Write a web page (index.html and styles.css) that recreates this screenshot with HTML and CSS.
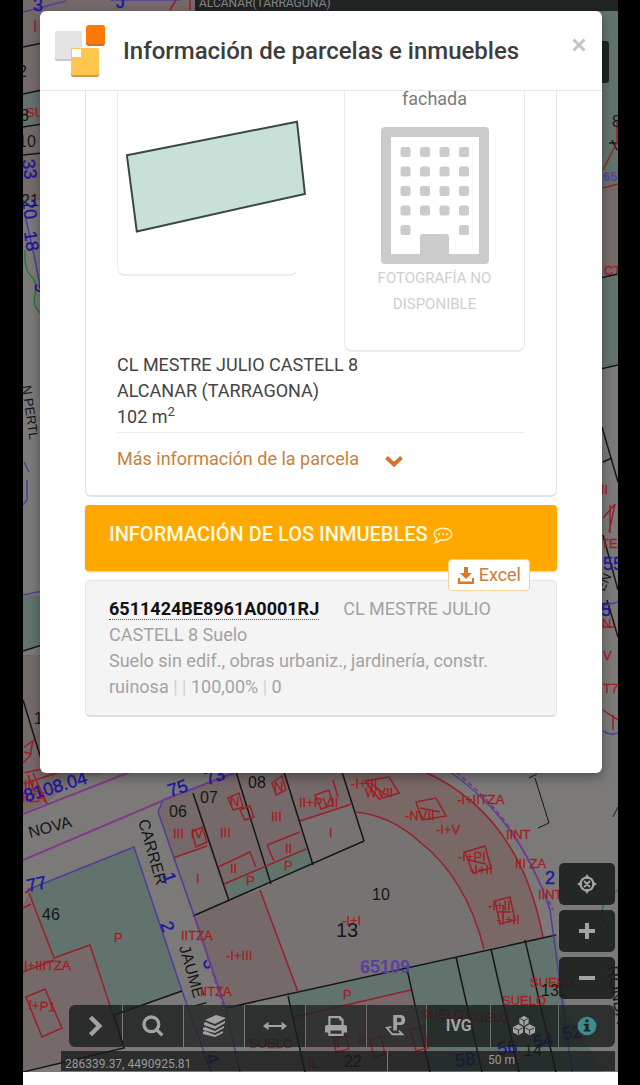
FILE: index.html
```html
<!DOCTYPE html>
<html lang="es">
<head>
<meta charset="utf-8">
<meta name="viewport" content="width=device-width, initial-scale=1">
<title>Información de parcelas e inmuebles</title>
<link rel="stylesheet" href="styles.css">
</head>
<body>
<div class="screen">
<main class="viewer">
<svg class="map" viewBox="23 0 595 1072" preserveAspectRatio="xMinYMin slice" aria-hidden="true">
  <rect class="street" x="23" y="0" width="595" height="1072"/>
  <!-- parcels along the left edge -->
  <path class="built" d="M23 0H200V200H23Z"/>
  <path class="green" d="M23 94L42 90V124L23 127Z"/>
  <path class="k" d="M23 47L42 43M23 94L42 90M23 127L42 124M23 155L42 153"/>
  <path class="v" d="M23 12L66 1M110 0L180 0M25 215L34 255L41 290"/>
  <path class="g" d="M25 250q-1 20 6 26t4 18t6 20l3 20"/>
  <path class="r" d="M170 10l6-10M190 10V0M35 20V32"/>
  <text class="b num" x="33" y="11">3</text><text class="b num" x="116" y="8">J</text>
  <text class="r lab" x="26" y="117">SUELO</text>
  <text class="kt num" x="20" y="121">8</text><text class="kt num" x="18" y="147">10</text>
  <text class="kt num" x="18" y="77">2</text><text class="kt num" x="21" y="206">21</text>
  <text class="b num" transform="translate(22 160) rotate(82)">33</text>
  <text class="b num" transform="translate(22 200) rotate(82)">20</text>
  <text class="b num" transform="translate(24 232) rotate(82)">18</text>
  <text class="b num" transform="translate(34 284) rotate(76)">9</text>
  <text class="kt lab" transform="translate(22 386) rotate(82)">N PERTL</text>
  <path class="v" d="M24 462l5 10M27 480v20l-4 5M23 595L42 591"/>
  <path class="built" d="M23 655H100V775H23Z"/>
  <path class="green" d="M23 595H42V645L23 651Z"/>
  <path class="k" d="M23 651L42 645M23 700L46 775"/>
  <text class="kt num" x="34" y="724">1</text>
  <path class="r" d="M24 747l9-6l-3 15l-7 7M23 773L42 769M24 752l8 2"/>
  <!-- parcels along the right edge -->
  <rect class="green" x="600" y="11" width="18" height="355"/>
  <path class="built" d="M600 189L618 184V275L600 278Z"/>
  <path class="k" d="M600 278L618 274M600 369L618 365M602 427L618 482M603 462L612 458M603 535L618 590M607 600L618 637M609 143h9M612 140l5 10"/>
  <path class="r" d="M603 170l14-28v-20M603 188l15-4M603 518l12-14l-6 28M610 505v28M603 627h12M603 710l15 10M613 715v15"/>
  <text class="vt lab" x="603" y="181">65</text><text class="kt num" x="612" y="127">8</text>
  <text class="r lab" x="604" y="275">CT</text><text class="r lab" x="601" y="494">II</text>
  <text class="r lab" x="601" y="548">TE</text><text class="r lab" x="602" y="628">N</text>
  <text class="r lab" x="603" y="660">V</text><text class="r lab" x="603" y="693">T7</text>
  <text class="b num" x="603" y="570">55</text><text class="kt lab" transform="translate(604 592) rotate(-65)">EN</text>
  <text class="b num" x="601" y="616">5</text>
  <path class="v" d="M603 606l15-4M603 731q8 5 15 2"/>
  <!-- block at the north west -->
  <path class="built" d="M23 773H80L47 803L23 812Z"/>
  <path class="p" d="M23 814L130 772"/>
  <path class="r" d="M28 775l6 16l10 2M33 773l14 31M60 772L23 784"/>
  <text class="r lab" x="24" y="789">III</text><text class="r lab" x="22" y="802">IIZA</text>
  <text class="b num" transform="translate(26 802) rotate(-17)">8108.04</text>
  <text class="kt lab street-name" transform="translate(30 838) rotate(-15)">NOVA</text>
  <!-- block 46 -->
  <path class="built" d="M23 905L29 893L53 958L90 945L123 1048L23 1072Z"/>
  <path class="green" d="M27 890L134 847L182 991L114 1015L90 945L54 958Z"/>
  <path class="p" d="M23 860L162 801L240 772"/>
  <path class="v" d="M27 890L134 847L182 991L211 1072"/>
  <path class="r" d="M29 893L54 958L90 945L124 1048M23 972L54 960M23 908l8-4M26 997l19-8l17 39l-20 9zM25 893l8-5"/>
  <path class="k" d="M114 1015L182 991M114 1015L124 1048L23 1072"/>
  <text class="b num" transform="translate(28 892) rotate(-12)">77</text>
  <text class="kt num" x="42" y="920">46</text>
  <text class="r lab" x="114" y="942">P</text><text class="r lab" x="24" y="970">I+IIITZA</text>
  <text class="r lab" transform="translate(28 1009) rotate(6)">I+P1</text>
  <text class="kt lab street-name" transform="translate(138 821) rotate(74)">CARRER</text>
  <text class="kt lab street-name" transform="translate(179 947) rotate(74)">JAUME I</text>
  <text class="b num" transform="translate(160 924) rotate(70)">2</text>
  <text class="b num" transform="translate(203 960) rotate(80)">3</text>
  <text class="b num" transform="translate(162 875) rotate(70)">1</text>
  <text class="b num" transform="translate(205 1056) rotate(70)">4</text>
  <!-- central blocks -->
  <path class="built" d="M158 812L163 800L236 772H350L364 841L229 901L260 890L298 992L226 1008L193 916L173 858Z"/>
  <path class="open" d="M300 821L351 804L364 841L313 865ZM173 858L207 845L229 901L195 916Z"/>
  <path class="open" d="M260 889L364 841L355 812Q390 816 420 842Q466 878 484 950L298 992Z"/>
  <path class="green" d="M224 884L306 849L313 865L229 901Z"/>
  <path class="band" d="M340 772H425Q520 815 543 937L484 949Q466 878 420 842Q390 815 355 812Z"/>
  <path class="green" d="M288 995L556 935L566 1010L605 1072H305Z"/>
  <path class="built" d="M293 1017L411 990L430 1072H305Z"/>
  <path class="k" d="M193 793L229 901M236 772L271 884M284 772L313 865M342 772L364 841M193 916L364 841M226 1008L556 935M288 996L305 1072M407 969L430 1072M456 957L482 1072M491 949L519 1072M525 940L556 1072"/>
  <path class="r" d="M173 858L207 846M218 867l32-15l6 15M224 884L306 849M267 845l33-13M267 845l7 16M300 821L352 804M260 890L298 992M294 1017L411 990M425 772Q520 815 543 937M355 812Q390 815 420 842Q466 878 484 949M228 798l11-5l4 14l-10 3zM240 810l10-4l4 11l-9 3zM272 783l10-7l4 14l-10 5zM192 832l10-5l5 15l-11 5zM315 795l14-5l4 15l-12 4zM333 780l5 17"/>
  <path class="v" d="M158 812L163 800L236 772M158 812L195 918L226 1010L240 1072M450 772Q520 820 550 910L572 1072"/>
  <path class="p dashed" d="M195 918L224 1008M163 800L240 772M456 772Q500 808 520 845T553 910"/>
  <text class="b num" transform="translate(170 797) rotate(-18)">75</text>
  <text class="b num" transform="translate(207 785) rotate(-18)">73</text>
  <text class="kt num" x="169" y="817">06</text><text class="kt num" x="200" y="803">07</text>
  <text class="kt num" x="248" y="788">08</text><text class="kt num" x="372" y="900">10</text>
  <text class="kt big" x="336" y="937">13</text>
  <g class="r lab">
    <text x="173" y="838">III</text><text x="196" y="883">I</text><text x="220" y="837">III</text>
    <text x="271" y="821">III</text><text x="329" y="837">I</text><text x="299" y="807">II+PVII</text>
    <text x="230" y="873">II</text><text x="285" y="853">II</text><text x="246" y="885">P</text>
    <text x="284" y="870">P</text><text x="342" y="925">-I+I</text><text x="226" y="960">-I+III</text>
    <text x="181" y="940">IITZA</text><text x="200" y="996">IITZA</text><text x="343" y="999">P</text>
    <text x="191" y="838">IV</text><text x="230" y="806">N</text><text x="274" y="791">N</text>
    <text x="351" y="788">-I+III</text><text x="365" y="797">WVII</text><text x="405" y="820">-NVII</text>
    <text x="436" y="834">-I+V</text><text x="457" y="804">-I+IITZA</text><text x="506" y="839">IINT</text>
    <text x="515" y="868">III ZA</text><text x="538" y="899">IINT</text><text x="458" y="861">-I+PI</text>
    <text x="470" y="874">-I+II</text><text x="488" y="910">-I+II</text><text x="497" y="924">-I+II</text>
  </g>
  <path class="r" d="M365 781l24-4l10 16l-20 6zM370 783l16 12M416 802l20-4l10 18l-24 4zM420 808l20 4M465 852l20-6l6 22l-18 5zM468 860l18 4M495 901l15-4l5 23l-15 4zM503 905v14M497 912h14"/>
  <text class="vt num" x="360" y="973">65109</text>
  <g class="r lab"><text x="502" y="1005">SUELO</text><text x="530" y="987">SUELO</text><text x="420" y="1019">SUELO</text><text x="466" y="1022">SUELO</text><text x="249" y="1048">SUELO</text><text x="333" y="1048">II</text><text x="358" y="1044">II</text><text x="308" y="1068">IL</text></g>
  <path class="r" d="M333 1038l13-3l3 14l-13 3zM370 1040l11-4l4 18l-11 4zM410 1030l14-4l4 22l-12 3z"/>
  <text class="b num" x="545" y="884">2</text>
  <text class="kt num" x="541" y="996">13</text><text class="kt num" x="344" y="1067">22</text>
  <text class="kt num" x="524" y="1056">14</text><text class="b num" transform="translate(456 1067) rotate(-8)">58</text>
  <text class="b num" transform="translate(498 1055) rotate(-8)">56</text>
  <text class="b num" transform="translate(534 1048) rotate(-8)">54</text>
  <text class="b num" transform="translate(563 1040) rotate(-8)">52</text>
  <path class="k thin" d="M535 778L549 823L538 828M529 778l8-4M613 817l5-10"/>
  <path class="g" d="M618 890q-14 8-16 20t10 20"/>
  <text class="kt lab street-name" transform="translate(607 967) rotate(80)">RONDA</text>
  <path class="dark" d="M590 41H606Q609 41 609 44V80Q609 83 606 83H590Z"/>
</svg>
<div class="place">ALCANAR(TARRAGONA)</div>

<section class="modal" role="dialog" aria-labelledby="modal-title">
  <header class="modal-head">
    <svg class="logo" viewBox="0 0 52 54" aria-hidden="true">
      <rect x="1" y="8" width="27" height="29" rx="2" fill="#c9c9c9"/><rect x="1" y="7" width="27" height="28" rx="2" fill="#e3e3e3"/>
      <rect x="32" y="2" width="19" height="20" rx="3" fill="#cf6b27"/><rect x="32" y="1" width="19" height="19" rx="3" fill="#ff7905"/>
      <rect x="17" y="25" width="28" height="28" rx="2" fill="#d29b42"/><rect x="17" y="24" width="28" height="27" rx="2" fill="#ffc64f"/>
      <path d="M18 25H27V33H18Z" fill="#fff"/>
    </svg>
    <h1 class="modal-title" id="modal-title">Información de parcelas e inmuebles</h1>
    <button class="close" type="button" aria-label="Cerrar"><svg viewBox="0 0 14 14"><path d="M1.500 1.500L12.500 12.500M12.500 1.500L1.500 12.500"/></svg></button>
  </header>
  <div class="modal-body">
    <article class="parcel">
      <div class="previews">
        <div class="preview sketch">
          <svg viewBox="0 0 181 184" role="img" aria-label="Croquis de la parcela"><path d="M9 64L181 30L189 103L19 141Z"/></svg>
        </div>
        <div class="preview facade">
          <span>fachada</span>
          <svg viewBox="0 0 108 138" aria-hidden="true">
            <path fill-rule="evenodd" d="M4 0H104Q108 0 108 4V133Q108 137 104 137H4Q0 137 0 133V4Q0 0 4 0ZM10 10V127H39V110Q39 107 42 107H65Q68 107 68 110V127H98V10Z"/>
            <g id="row"><rect x="19.500" y="20" width="10" height="10" rx="2.500"/><rect x="39" y="20" width="10" height="10" rx="2.500"/><rect x="58.500" y="20" width="10" height="10" rx="2.500"/><rect x="78" y="20" width="10" height="10" rx="2.500"/></g>
            <use href="#row" y="19.500"/><use href="#row" y="39"/><use href="#row" y="58.500"/>
            <rect x="19.500" y="98" width="10" height="10" rx="2.500"/><rect x="78" y="98" width="10" height="10" rx="2.500"/>
          </svg>
          <p class="no-photo">FOTOGRAFÍA NO<br>DISPONIBLE</p>
        </div>
      </div>
      <address class="where">CL MESTRE JULIO CASTELL 8<br>ALCANAR (TARRAGONA)<br>102 m<sup>2</sup></address>
      <a class="more" href="#parcela">Más información de la parcela
        <svg viewBox="0 0 20 13" aria-hidden="true"><path d="M2.500 2.500L10 9.500L17.500 2.500"/></svg></a>
    </article>

    <div class="banner">
      <h2 class="banner-title">INFORMACIÓN DE LOS INMUEBLES</h2>
      <svg class="bubble" viewBox="0 0 20 17" aria-hidden="true"><path d="M10 1.200C15 1.200 18.800 3.800 18.800 7.200S15 13.200 10 13.200Q8.500 13.200 7.300 12.900Q5 15.300 2.200 15.500Q4 13.500 4 11.600Q1.200 9.800 1.200 7.200C1.200 3.800 5 1.200 10 1.200Z"/><path class="dots" d="M6 7.200h.1M10 7.200h.1M14 7.200h.1"/></svg>
      <button class="excel" type="button"><svg viewBox="0 0 18 19" aria-hidden="true"><path d="M7 1H11V7H15L9 13L3 7H7Z"/><path d="M1 12H3V15.500H15V12H17V18H1Z"/></svg>Excel</button>
    </div>

    <article class="property">
      <p><a class="ref" href="#inmueble">6511424BE8961A0001RJ</a>CL MESTRE JULIO CASTELL 8 Suelo</p>
      <p>Suelo sin edif., obras urbaniz., jardinería, constr. ruinosa <i>|</i> <i>|</i> 100,00% <i>|</i> 0</p>
    </article>
  </div>
</section>

<div class="controls">
  <div class="zoom">
    <button type="button" aria-label="Mi ubicación"><svg viewBox="0 0 20 20"><path class="line" d="M10 3.500A6.500 6.500 0 1 1 9.990 3.500M7 7L13 13M13 7L7 13"/><path d="M10 0L13 5H7ZM10 20L7 15H13ZM0 10L5 7V13ZM20 10L15 13V7Z"/></svg></button>
    <button type="button" aria-label="Acercar"><svg viewBox="0 0 20 20"><path d="M8 2H12V8H18V12H12V18H8V12H2V8H8Z"/></svg></button>
    <button type="button" aria-label="Alejar"><svg viewBox="0 0 20 20"><path d="M2 8H18V12H2Z"/></svg></button>
  </div>
  <nav class="toolbar" aria-label="Herramientas">
    <button type="button" aria-label="Desplegar"><svg viewBox="0 0 20 20"><path class="line thick" d="M5 2L13 10L5 18"/></svg></button>
    <button type="button" aria-label="Buscar"><svg viewBox="0 0 20 20"><circle class="line bold" cx="8.500" cy="8.500" r="6.700"/><path class="line bold" d="M13.500 13.500L18.500 18.500"/></svg></button>
    <button class="lit" type="button" aria-label="Capas"><svg viewBox="0 0 24 22"><path d="M3 5L14 0L24 3L13 9ZM2 8L3 7L13 11L23 6V8L13 14L2 10ZM1 13L3 12L13 16L22 11V13L13 18L1 15ZM1 17L3 16L13 20L21 16V18L13 22L1 19Z"/></svg></button>
    <button type="button" aria-label="Medir"><svg viewBox="0 0 22 20"><path d="M0 10L5 6V9H17V6L22 10L17 14V11H5V14Z"/></svg></button>
    <button class="lit" type="button" aria-label="Imprimir"><svg viewBox="0 0 20 20"><path fill-rule="evenodd" d="M3 1H14L17 4V9H18Q20 9 20 11V16H17V19H3V16H0V11Q0 9 2 9H3ZM5 3V9H15V5H13V3ZM5 14V17H15V14Z"/></svg></button>
    <button class="lit park" type="button" aria-label="Aparcar consulta"><svg viewBox="0 0 24 24"><path fill-rule="evenodd" d="M9 0H17Q22 0 22 5.500T17 11H13V17H9ZM13 3V8H16Q18 8 18 5.500T16 3Z"/><path class="line" d="M7 13L2 14L8 21H19L15 17"/></svg></button>
    <button class="ivg" type="button">IVG</button>
    <button type="button" aria-label="Modelo 3D"><svg viewBox="0 0 26 22"><path d="M8 3L13 0L18 3V8L13 11L8 8ZM1 12L7 9L12 12V18L7 21L1 18ZM14 12L19 9L25 12V18L19 21L14 18Z"/><path class="cut" d="M9 3L13 5.500L17 3M13 5.500V10M2 13L7 15.500L11.500 13M7 15.500V20M14.500 13L19 15.500L24 13M19 15.500V20"/></svg></button>
    <button type="button" aria-label="Información"><svg viewBox="0 0 20 20"><circle class="info" cx="10" cy="10" r="8.500"/><path class="info-mark" d="M8.500 4H11.500V6.500H8.500ZM7 8H11.500V13.500H13V15H7V13.500H8.500V9.500H7Z"/></svg></button>
  </nav>
  <footer class="status"><span>286339.37, 4490925.81</span><span class="scale">50 m</span></footer>
</div>
</main>
</div>
</body>
</html>
```
FILE: styles.css
```css
* { box-sizing: border-box; }
body {
  margin: 0;
  background: #000;
  color: #444;
  font: 18px/26px Roboto, sans-serif;
}
button { border: 0; padding: 0; font: inherit; cursor: pointer; }
p, h1, h2 { margin: 0; }
a { text-decoration: none; }

.screen {
  min-height: 100vh;
  margin: 0 22px 0 23px;
  padding-bottom: 13px;
  background: #fff;
}
.viewer {
  position: relative;
  display: flex;
  flex-direction: column;
  min-height: calc(100vh - 13px);
  padding: 11px 3px 1px 17px;
  overflow: hidden;
}

/* cadastral map, dimmed under the dialog */
.map { position: absolute; inset: 0; width: 100%; height: 100%; }
.map path { fill: none; stroke-width: 1.5; }
.map .street { fill: #7b7a79; }
.map .built { fill: #756a69; }
.map .open { fill: #787373; }
.map .band { fill: #796866; }
.map .green { fill: #62736d; }
.map .dark { fill: #1c2625; }
.map .k { stroke: #151616; }
.map .thin { stroke-width: 1; }
.map .v { stroke: #4f3d9a; }
.map .g { stroke: #267a37; }
.map .p { stroke: #803b87; stroke-width: 2; }
.map .dashed { stroke-dasharray: 5 3; }
.map path.r { stroke: #98202a; }
.map text { font-family: "Liberation Sans", sans-serif; }
.map text.r, .map g.r text { fill: #a61d22; stroke: #a61d22; stroke-width: .3; }
.map .b { fill: #1e17a0; stroke: #1e17a0; stroke-width: .4; }
.map .kt { fill: #151616; }
.map .vt { fill: #59419e; font-weight: bold; }
.map .lab { font-size: 13px; }
.map .street-name { font-size: 16px; }
.map .num { font-size: 16px; }
.map .b.num, .map .vt.num { font-size: 18px; }
.map .big { font-size: 20px; }

.place {
  position: absolute;
  top: 0;
  left: 172px;
  right: 0;
  height: 11px;
  padding-left: 4px;
  overflow: hidden;
  background: rgba(20, 24, 24, .88);
  color: #858585;
  font-size: 12px;
  line-height: 6px;
}

.modal {
  position: relative;
  margin-right: 13px;
  border-radius: 6px;
  background: #fff;
  box-shadow: 0 4px 12px rgba(0, 0, 0, .35);
}
.modal-head {
  display: flex;
  align-items: center;
  height: 80px;
  padding: 0 16px 0 14px;
  border-bottom: 1px solid #e6e6e6;
}
.logo { width: 52px; height: 54px; flex: none; }
.modal-title {
  flex: 1;
  margin-left: 17px;
  color: #3d3d3d;
  font-size: 24px;
  font-weight: 500;
  line-height: 32px;
}
.close { align-self: flex-start; margin-top: 27px; background: none; line-height: 0; }
.close svg { width: 14px; height: 14px; fill: none; stroke: #c4c4c4; stroke-width: 3; }

.modal-body { padding: 0 45px 56px; }
.parcel {
  padding: 0 31px 23px;
  border: solid #e4e4e4;
  border-width: 0 1px 2px;
  border-radius: 0 0 6px 6px;
}
.previews { display: grid; grid-template-columns: 1fr 1fr; gap: 46px; }
.preview { border: solid #ececec; border-width: 0 1px 2px; border-radius: 0 0 8px 8px; }
.sketch { align-self: start; height: 185px; border-right-color: transparent; }
.sketch svg { display: block; width: 100%; height: 184px; overflow: visible; }
.sketch path { fill: #c7e0d8; stroke: #3b4744; stroke-width: 2; }
.facade {
  display: flex;
  flex-direction: column;
  align-items: center;
  padding: 0 0 33px;
  color: #7b7b7b;
}
.facade svg { width: 108px; height: 138px; margin: 20px 0 0; fill: #cbcbcb; }
.facade span { line-height: 16px; }
.no-photo { color: #cfcfcf; font-size: 15px; text-align: center; }
.where {
  padding-bottom: 2px;
  border-bottom: 1px solid #ececec;
  font-style: normal;
}
sup { font-size: 13px; line-height: 0; }
.more {
  display: flex;
  align-items: center;
  gap: 25px;
  margin-top: 13px;
  color: #c97f3c;
}
.more svg { width: 20px; height: 13px; margin-top: 4px; fill: none; stroke: #d9712a; stroke-width: 4; }

.banner {
  position: relative;
  display: flex;
  gap: 5px;
  margin-top: 8px;
  padding: 16px 24px 24px;
  border-radius: 4px;
  background: #ffa800;
  box-shadow: 0 1px 2px rgba(0, 0, 0, .2);
}
.banner-title { color: #fffbe0; font-size: 20px; font-weight: 500; line-height: 26px; }
.bubble { width: 20px; height: 17px; margin-top: 6px; fill: none; stroke: #fff3c4; stroke-width: 1.5; }
.dots { stroke-width: 2; stroke-linecap: round; }
.excel {
  position: absolute;
  right: 27px;
  bottom: -20px;
  display: flex;
  align-items: center;
  gap: 4px;
  height: 32px;
  padding: 0 8px;
  border: 1px solid #f2d3a0;
  border-radius: 4px;
  background: #fff;
  color: #c97c3a;
}
.excel svg { width: 18px; height: 19px; fill: #dd7621; }

.property {
  margin-top: 9px;
  padding: 15px 23px 15px;
  border: 1px solid #e6e6e6;
  border-bottom: 2px solid #dedede;
  border-radius: 5px;
  background: #f4f4f4;
  color: #a3a3a3;
}
.ref { margin-right: 24px; border-bottom: 1px dotted #555; color: #111; font-weight: 700; }
.property i { color: #d0d0d0; font-style: normal; }

.controls {
  position: relative;
  display: flex;
  flex-direction: column;
  margin-top: auto;
}
.controls button {
  display: flex;
  align-items: center;
  justify-content: center;
  height: 42px;
  background: rgba(25, 30, 29, .9);
}
.controls svg { width: 20px; height: 20px; fill: #a3a3a3; }
.line { fill: none; stroke: #a3a3a3; stroke-width: 2; }
.bold { stroke-width: 3; }
.thick { stroke-width: 4; }
.zoom {
  display: grid;
  gap: 5px;
  width: 56px;
  margin: 0 0 6px auto;
}
.zoom button { border-radius: 5px; }
.toolbar {
  display: grid;
  grid-template-columns: 54fr 60fr 61fr 61fr 60fr 60fr 64fr 67fr 57fr;
  gap: 1px;
  margin-left: 29px;
  border-radius: 6px;
  overflow: hidden;
}
.toolbar button { background: rgba(25, 30, 29, .8); }
.toolbar button.lit { background: rgba(35, 37, 37, .8); }
.toolbar svg { width: 24px; height: 22px; }
.toolbar .ivg { color: #a3a3a3; font-size: 16px; font-weight: 700; }
.cut { fill: none; stroke: #262b2a; stroke-width: 1; }
.toolbar .info { fill: #3f8b8d; }
.info-mark { fill: #16282a; }
.status {
  display: flex;
  height: 20px;
  margin: 4px 0 0 21px;
  background: rgba(25, 28, 28, .8);
  color: #9a9a9a;
  font-size: 12px;
  line-height: 26px;
}
.status span { flex: 325; padding-left: 4px; }
.status .scale { flex: 229; padding: 0; border-left: 1px solid #777; line-height: 18px; text-align: center; }
```
